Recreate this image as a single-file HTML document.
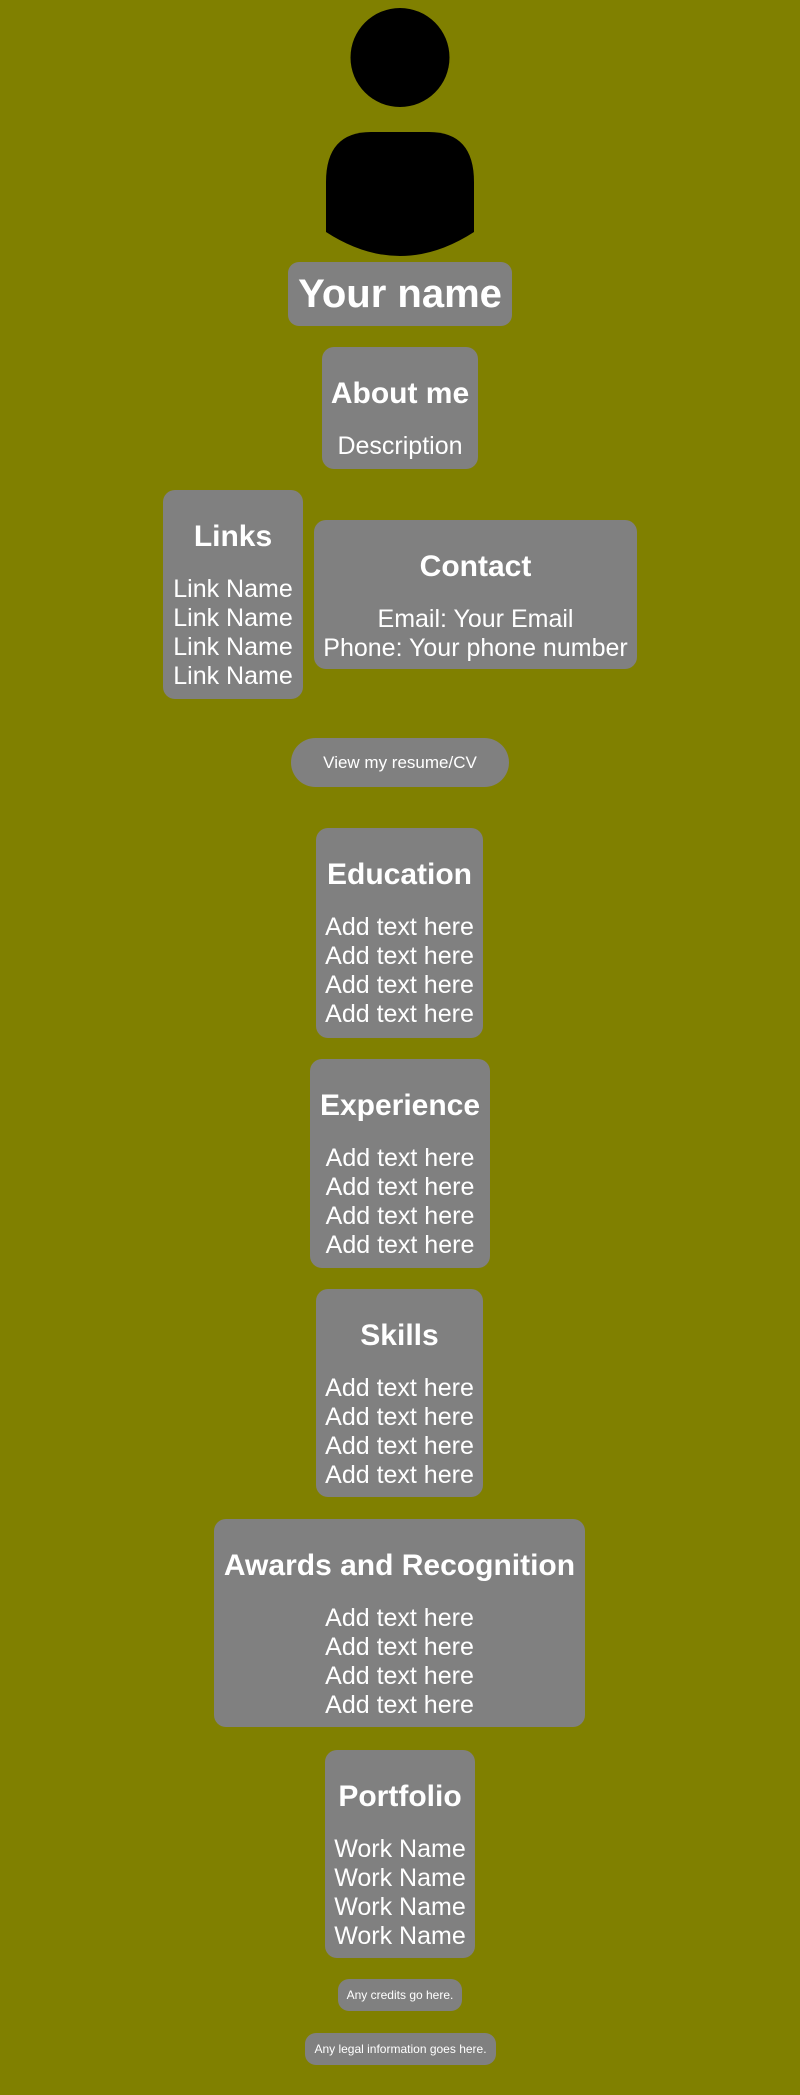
<!DOCTYPE html>
<html><head><meta charset="utf-8"><style>
html,body{margin:0;padding:0}
body{width:800px;height:2095px;background:#808000;position:relative;font-family:"Liberation Sans",Arial,sans-serif;color:#fff;overflow:hidden}
.b{position:absolute;background:#808080;border-radius:12px;box-sizing:border-box;text-align:center;padding-top:29px}
.b h2{margin:0;font-size:30px;line-height:35px;font-weight:bold;white-space:nowrap}
.b .t{margin-top:21px;font-size:25px;line-height:29px;white-space:nowrap}
.s{position:absolute;background:#808080;display:flex;align-items:center;justify-content:center;white-space:nowrap}
</style></head><body>
<svg width="800" height="270" style="position:absolute;left:0;top:0">
<circle cx="400" cy="57.5" r="49.5" fill="#000"/>
<path d="M326 232 V182 Q326 132 371 132 H429 Q474 132 474 182 V232 Q400 280 326 232 Z" fill="#000"/>
</svg>
<div class="s" style="left:288px;top:262px;width:224px;height:64px;border-radius:11px;font-size:40px;font-weight:bold">Your name</div>
<div class="b" style="left:322px;top:347px;width:156px;height:122px"><h2>About me</h2><div class="t">Description</div></div>
<div class="b" style="left:163px;top:490px;width:140px;height:209px"><h2>Links</h2><div class="t">Link Name<br>Link Name<br>Link Name<br>Link Name</div></div>
<div class="b" style="left:314px;top:520px;width:323px;height:149px"><h2>Contact</h2><div class="t">Email: Your Email<br>Phone: Your phone number</div></div>
<div class="s" style="left:291px;top:738px;width:218px;height:49px;border-radius:25px;font-size:17px">View my resume/CV</div>
<div class="b" style="left:316px;top:828px;width:167px;height:210px"><h2>Education</h2><div class="t">Add text here<br>Add text here<br>Add text here<br>Add text here</div></div>
<div class="b" style="left:310px;top:1059px;width:180px;height:209px"><h2>Experience</h2><div class="t">Add text here<br>Add text here<br>Add text here<br>Add text here</div></div>
<div class="b" style="left:316px;top:1289px;width:167px;height:208px"><h2>Skills</h2><div class="t">Add text here<br>Add text here<br>Add text here<br>Add text here</div></div>
<div class="b" style="left:214px;top:1519px;width:371px;height:208px"><h2>Awards and Recognition</h2><div class="t">Add text here<br>Add text here<br>Add text here<br>Add text here</div></div>
<div class="b" style="left:325px;top:1750px;width:150px;height:208px"><h2>Portfolio</h2><div class="t">Work Name<br>Work Name<br>Work Name<br>Work Name</div></div>
<div class="s" style="left:338px;top:1979px;width:124px;height:32px;border-radius:11px;font-size:12px">Any credits go here.</div>
<div class="s" style="left:305px;top:2033px;width:191px;height:32px;border-radius:11px;font-size:12px">Any legal information goes here.</div>
</body></html>
